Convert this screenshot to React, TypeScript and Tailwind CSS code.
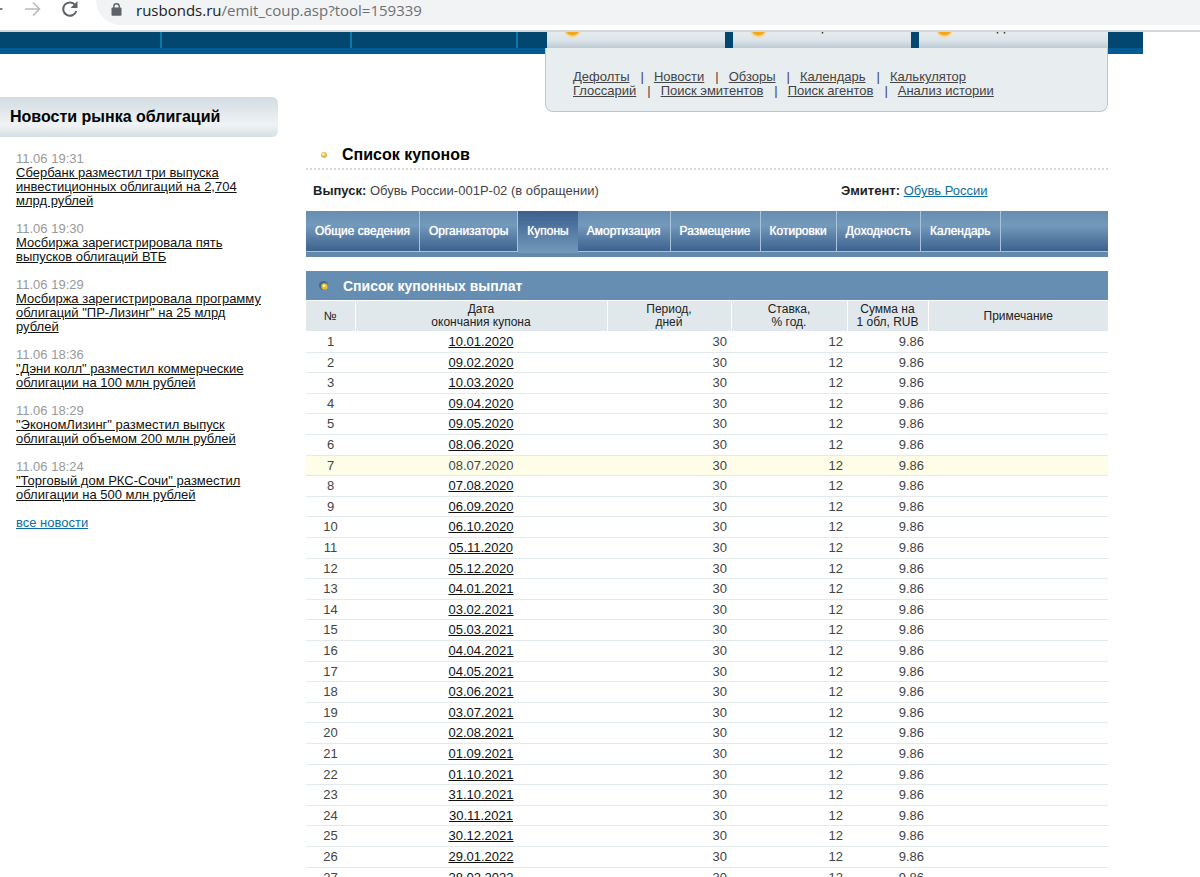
interface NewsItem {
  time: string;
  title: string;
}

const NEWS: NewsItem[] = [
  { time: "11.06 19:31", title: "Сбербанк разместил три выпуска инвестиционных облигаций на 2,704 млрд рублей" },
  { time: "11.06 19:30", title: "Мосбиржа зарегистрировала пять выпусков облигаций ВТБ" },
  { time: "11.06 19:29", title: "Мосбиржа зарегистрировала программу облигаций \"ПР-Лизинг\" на 25 млрд рублей" },
  { time: "11.06 18:36", title: "\"Дэни колл\" разместил коммерческие облигации на 100 млн рублей" },
  { time: "11.06 18:29", title: "\"ЭкономЛизинг\" разместил выпуск облигаций объемом 200 млн рублей" },
  { time: "11.06 18:24", title: "\"Торговый дом РКС-Сочи\" разместил облигации на 500 млн рублей" },
];

const SERVICE_LINKS = [
  ["Дефолты", "Новости", "Обзоры", "Календарь", "Калькулятор"],
  ["Глоссарий", "Поиск эмитентов", "Поиск агентов", "Анализ истории"],
];

const TABS = [
  "Общие сведения",
  "Организаторы",
  "Купоны",
  "Амортизация",
  "Размещение",
  "Котировки",
  "Доходность",
  "Календарь",
];

const ACTIVE_TAB = "Купоны";

const COUPON_DATES = [
  "10.01.2020", "09.02.2020", "10.03.2020", "09.04.2020", "09.05.2020", "08.06.2020",
  "08.07.2020", "07.08.2020", "06.09.2020", "06.10.2020", "05.11.2020", "05.12.2020",
  "04.01.2021", "03.02.2021", "05.03.2021", "04.04.2021", "04.05.2021", "03.06.2021",
  "03.07.2021", "02.08.2021", "01.09.2021", "01.10.2021", "31.10.2021", "30.11.2021",
  "30.12.2021", "29.01.2022", "28.02.2022",
];

const CURRENT_COUPON = "08.07.2020";

function BrowserBar() {
  return (
    <div className="flex h-8 items-start overflow-hidden border-b-2 border-[#d5d8da] bg-white">
      <div className="flex w-24 shrink-0 items-center pt-px">
        <svg width="96" height="18" viewBox="0 0 96 18" fill="none" aria-hidden="true">
          <path d="M0 8h2.500" stroke="#5f6368" strokeWidth="1.600" />
          <path d="M25 8h14M33 1.500 39.500 8 33 14.500" stroke="#babcbe" strokeWidth="1.700" />
          <path d="M75.200 4A6.700 6.700 0 1 0 76.300 10" stroke="#5f6368" strokeWidth="2" />
          <path d="M77.500 0v7h-7z" fill="#5f6368" />
        </svg>
      </div>
      <div className="flex h-[25px] flex-1 items-start rounded-bl-full bg-[#f1f3f4] pl-[15px]">
        <svg className="mt-[3px] shrink-0" width="11" height="13" viewBox="0 0 11 13" fill="none" aria-hidden="true">
          <path d="M2.800 5V3.400a2.700 2.700 0 0 1 5.400 0V5" stroke="#5f6368" strokeWidth="1.400" />
          <rect x="0.500" y="4.500" width="10" height="8.300" rx="1" fill="#5f6368" />
        </svg>
        <span className="pl-[14px] font-['Open_Sans','Noto_Sans',sans-serif] text-[15px] leading-5 text-[#6c7074]">
          <span className="text-[#202124]">rusbonds.ru</span>/emit_coup.asp?tool=159339
        </span>
      </div>
    </div>
  );
}

function HeaderTab({ children }: { children?: React.ReactNode }) {
  return (
    <div className="flex h-4 items-start overflow-hidden bg-linear-to-b from-[#e6ecee] via-[#dde5e9] to-[#bccbd4] pl-[17px]">
      <svg width="160" height="7" viewBox="0 0 160 7" aria-hidden="true">
        <circle cx="8.500" cy="-3" r="8.500" fill="#f4d593" />
        <circle cx="8.500" cy="-3.500" r="7" fill="#f3a81c" />
        {children}
      </svg>
    </div>
  );
}

function SiteHeader() {
  return (
    <div className="flex h-[22px] border-b-[6px] border-[#045a92] bg-[#03466f]">
      <div className="w-[162px] border-r-2 border-[#0c78a6]" />
      <div className="w-[190px] border-r-2 border-[#0c78a6]" />
      <div className="w-[166px] border-r-2 border-[#0c78a6]" />
      <div className="grid flex-1 grid-cols-[178fr_178fr_189fr] gap-2 pr-[35px] pl-[29px]">
        <HeaderTab />
        <HeaderTab>
          <path d="M72.500 0v1.500" stroke="#333" strokeWidth="1.500" />
        </HeaderTab>
        <HeaderTab>
          <path d="M61.500 0v1.500M68.500 0v1.500" stroke="#333" strokeWidth="1.500" />
        </HeaderTab>
      </div>
    </div>
  );
}

function ServiceLinks() {
  return (
    <div className="relative z-10 -mt-1.5 ml-auto h-16 w-[563px] rounded-b-lg border border-t-0 border-[#b9c8d2] bg-[#e8edf0] pt-[22px] pl-[27px] text-[13px] leading-[14px] text-[#444]">
      {SERVICE_LINKS.map((row) => (
        <div key={row[0]}>
          {row.map((label, i) => (
            <span key={label}>
              {i > 0 && <span className="pr-2.5 pl-[11px]">|</span>}
              <a href="#" className="underline">{label}</a>
            </span>
          ))}
        </div>
      ))}
    </div>
  );
}

function Sidebar() {
  return (
    <aside className="w-[278px] shrink-0 pt-[43px]">
      <h2 className="h-10 rounded-r-md bg-linear-to-b from-[#d2dce2] via-[#f0f3f5] via-70% to-[#d6dfe4] pl-2.5 text-base leading-10 font-bold text-black">
        Новости рынка облигаций
      </h2>
      <div className="flex flex-col gap-3.5 pt-[15px] pr-4 pl-4 text-[13px] leading-[14px]">
        {NEWS.map((item) => (
          <div key={item.time}>
            <div className="text-[#999]">{item.time}</div>
            <a href="#" className="text-[#111] underline">{item.title}</a>
          </div>
        ))}
        <a href="#" className="text-[#0d6e9e] underline">все новости</a>
      </div>
    </aside>
  );
}

function TabBar() {
  return (
    <nav className="mt-2.5 flex h-[46px] border-b-[5px] border-[#6489ab] bg-linear-to-b from-[#668cb0] via-[#7399bb] via-35% to-[#3b608d] text-xs text-white">
      {TABS.map((tab) => (
        <a
          key={tab}
          href="#"
          className={
            tab === ACTIVE_TAB
              ? "-mb-px h-[42px] bg-linear-to-b from-[#3b608d] to-[#7399bb] px-[9px] pt-2.5 leading-5 [text-shadow:0_0_1px_white]"
              : "border-r border-b border-[#a9c4da] px-[9px] pt-2.5 leading-5 [text-shadow:0_0_1px_white]"
          }
        >
          {tab}
        </a>
      ))}
      <div className="flex-1 border-b border-[#a9c4da]" />
    </nav>
  );
}

function CouponTable() {
  return (
    <section className="mt-3.5">
      <div className="flex h-[29px] items-center bg-[#668eb2] text-sm font-bold text-white">
        <svg className="mr-[13px] ml-3" width="12" height="12" viewBox="0 0 12 12" aria-hidden="true">
          <circle cx="5.500" cy="5.500" r="4.500" fill="#46698f" />
          <circle cx="6.500" cy="6.500" r="3.200" fill="#e7bd36" />
          <circle cx="6" cy="5.800" r="1.300" fill="#fff2b0" />
        </svg>
        <h2>Список купонных выплат</h2>
      </div>
      <table className="w-full table-fixed border-collapse text-[13px] leading-[14px] text-[#444]">
        <colgroup>
          <col className="w-[49px]" />
          <col className="w-[252px]" />
          <col className="w-[124px]" />
          <col className="w-[116px]" />
          <col className="w-[81px]" />
          <col />
        </colgroup>
        <thead>
          <tr className="h-[31px] border-y border-white bg-[#e1e8ec] text-xs leading-[13px] text-[#222] [&>th+th]:border-l [&>th]:border-white [&>th]:p-0 [&>th]:font-normal">
            <th>№</th>
            <th>Дата<br />окончания купона</th>
            <th>Период,<br />дней</th>
            <th>Ставка,<br />% год.</th>
            <th>Сумма на<br />1 обл, RUB</th>
            <th>Примечание</th>
          </tr>
        </thead>
        <tbody>
          {COUPON_DATES.map((date, i) => (
            <tr
              key={date}
              className={
                date === CURRENT_COUPON
                  ? "h-5 border-b border-[#e3eaed] bg-[#fdfde8]"
                  : "h-[21px] border-b border-[#e3eaed] nth-[5n+2]:h-5 nth-[5n+4]:h-5"
              }
            >
              <td className="p-0 text-center">{i + 1}</td>
              <td className="p-0 text-center">
                {date === CURRENT_COUPON ? date : <a href="#" className="text-[#111] underline">{date}</a>}
              </td>
              <td className="p-0 pr-1 text-right">30</td>
              <td className="p-0 pr-1 text-right">12</td>
              <td className="p-0 pr-1 text-right">9.86</td>
              <td className="p-0" />
            </tr>
          ))}
        </tbody>
      </table>
    </section>
  );
}

export default function App() {
  return (
    <div className="h-screen overflow-hidden bg-white font-['Liberation_Sans',Arial,sans-serif]">
      <BrowserBar />
      <div className="pr-[57px]">
        <SiteHeader />
        <div className="flex gap-7">
          <Sidebar />
          <main className="min-w-0 flex-1 pr-[35px]">
            <ServiceLinks />
            <div className="mt-8 flex h-[26px] items-start border-b-2 border-dotted border-[#d8d8d8] pt-px">
              <svg className="mt-1.5 mr-3.5 ml-3.5" width="8" height="8" viewBox="0 0 8 8" aria-hidden="true">
                <circle cx="4" cy="4" r="3" fill="#e9bd45" />
                <circle cx="3.400" cy="3.200" r="1.300" fill="#fff1b8" />
              </svg>
              <h1 className="text-base leading-5 font-bold text-black">Список купонов</h1>
            </div>
            <div className="mt-[11px] flex pl-[7px] text-[13px] leading-5 text-[#444]">
              <p className="w-[528px]">
                <b className="text-[#222]">Выпуск:</b> Обувь России-001Р-02 (в обращении)
              </p>
              <p>
                <b className="text-[#222]">Эмитент:</b>{" "}
                <a href="#" className="text-[#0d6e9e] underline">Обувь России</a>
              </p>
            </div>
            <TabBar />
            <CouponTable />
          </main>
        </div>
      </div>
    </div>
  );
}
